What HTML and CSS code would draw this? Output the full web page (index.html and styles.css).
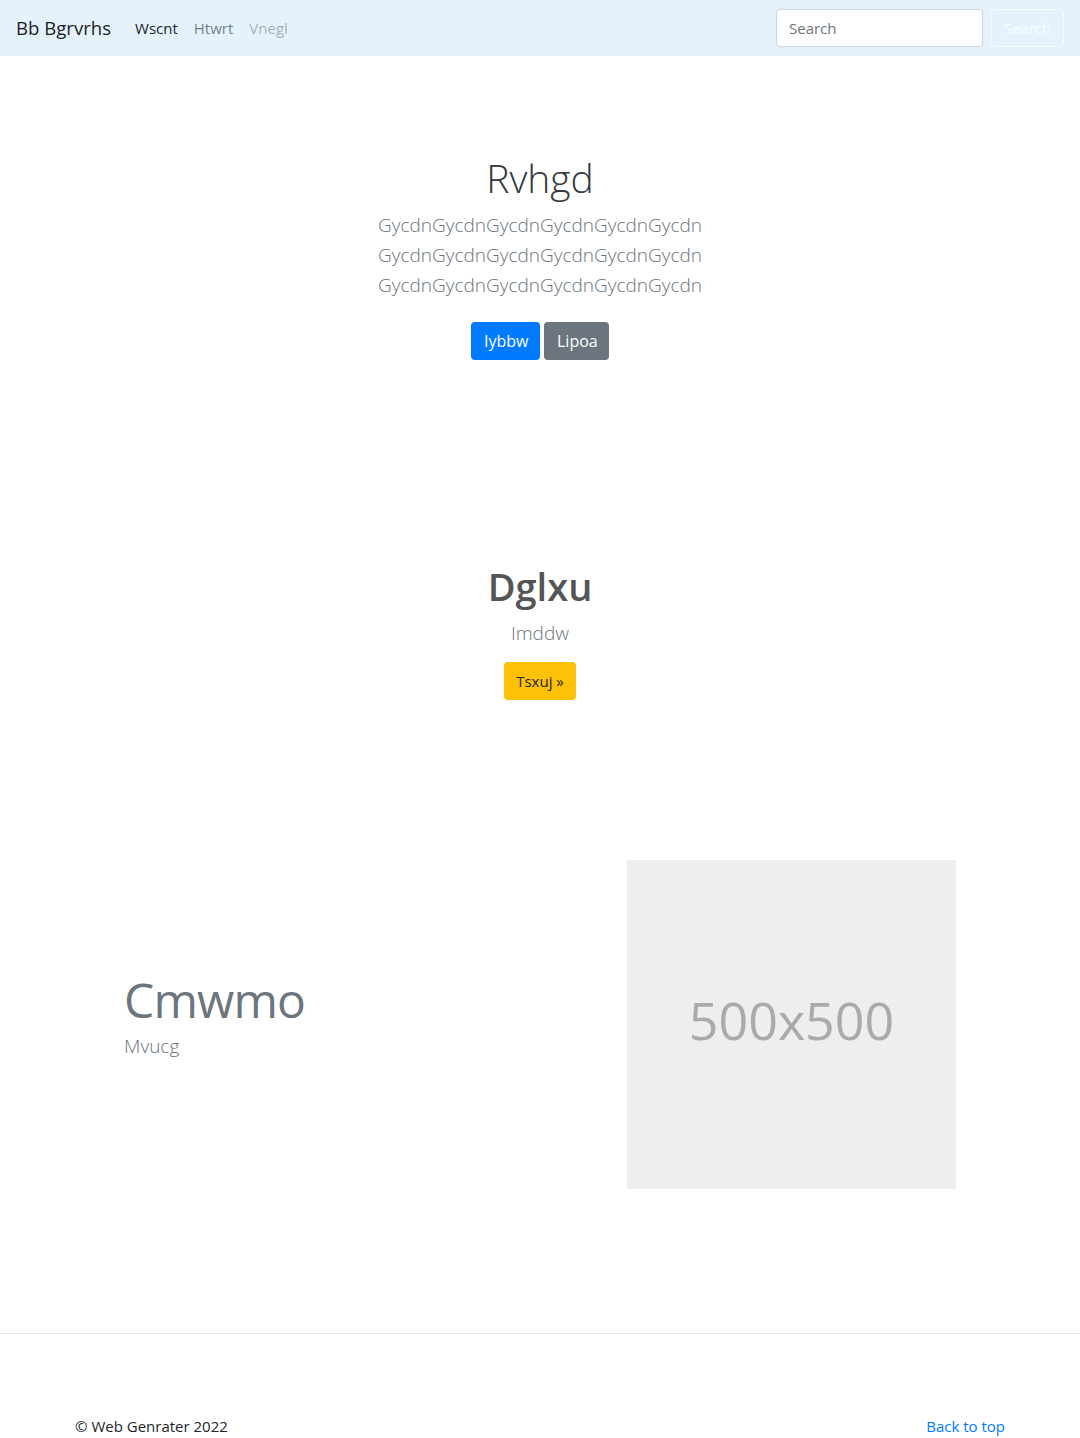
FILE: index.html
```html
<!DOCTYPE html>
<html lang="en">
<head>
<meta charset="utf-8">
<title>Bb Bgrvrhs</title>
<link rel="stylesheet" href="styles.css">
</head>
<body>
<nav class="navbar">
  <a class="brand" href="#">Bb Bgrvrhs</a>
  <ul class="nav-links">
    <li><a class="nav-link active" href="#">Wscnt</a></li>
    <li><a class="nav-link" href="#">Htwrt</a></li>
    <li><a class="nav-link disabled" href="#">Vnegl</a></li>
  </ul>
  <form class="search">
    <input class="search-input" type="text" placeholder="Search">
    <button class="search-btn" type="button">Search</button>
  </form>
</nav>

<main>
  <section class="hero">
    <h1 class="hero-title">Rvhgd</h1>
    <p class="lead hero-lead">GycdnGycdnGycdnGycdnGycdnGycdn GycdnGycdnGycdnGycdnGycdnGycdn GycdnGycdnGycdnGycdnGycdnGycdn</p>
    <div class="hero-actions">
      <a class="btn btn-primary" href="#">Iybbw</a>
      <a class="btn btn-secondary" href="#">Lipoa</a>
    </div>
  </section>

  <section class="promo">
    <h2 class="promo-title">Dglxu</h2>
    <p class="lead promo-lead">Imddw</p>
    <a class="btn btn-warning" href="#">Tsxuj &raquo;</a>
  </section>

  <section class="feature">
    <div class="feature-text">
      <h2 class="feature-title">Cmwmo</h2>
      <p class="lead feature-lead">Mvucg</p>
    </div>
    <div class="placeholder">500x500</div>
  </section>
</main>

<footer class="footer">
  <p class="copy">&copy; Web Genrater 2022</p>
  <a class="back" href="#">Back to top</a>
</footer>
</body>
</html>
```

FILE: styles.css
```css
* { box-sizing: border-box; }

html, body {
  margin: 0;
  padding: 0;
}

body {
  font-family: "Open Sans", "Noto Sans", "Liberation Sans", sans-serif;
  font-size: 16px;
  line-height: 1.5;
  color: #212529;
  background: #fff;
}

a { text-decoration: none; }

.navbar {
  height: 56px;
  background: #e3f2fd;
  display: flex;
  align-items: center;
  padding: 0 16px;
}

.brand {
  font-size: 18.6px;
  color: rgba(0,0,0,.9);
  margin-right: 16px;
  line-height: 30px;
}

.nav-links {
  list-style: none;
  margin: 0;
  padding: 0;
  display: flex;
  flex: 1;
}

.nav-link {
  display: block;
  padding: 8px;
  font-size: 15px;
  color: rgba(0,0,0,.5);
}

.nav-link.active { color: rgba(0,0,0,.9); }
.nav-link.disabled { color: rgba(0,0,0,.3); }

.search {
  display: flex;
  align-items: center;
  gap: 8px;
}

.search-input {
  width: 207px;
  height: 38px;
  border: 1px solid #ced4da;
  border-radius: 4px;
  padding: 6px 12px;
  font-family: inherit;
  font-size: 15px;
  color: #495057;
  background: #fff;
}

.search-input::placeholder { color: #6c757d; }

.search-btn {
  width: 73px;
  height: 38px;
  border: 1px solid rgba(255,255,255,.7);
  border-radius: 4px;
  background: transparent;
  color: rgba(255,255,255,.8);
  font-family: inherit;
  font-size: 15px;
  padding: 0;
}

.hero {
  padding: 98px 0 0;
  text-align: center;
}

.hero-title {
  margin: 0 0 8px;
  font-size: 39px;
  font-weight: 300;
  line-height: 48px;
  color: #343a40;
}

.lead {
  font-size: 19px;
  font-weight: 300;
  line-height: 30px;
  color: #6c757d;
  margin: 0 0 16px;
}

.hero-lead {
  width: 450px;
  margin-left: auto;
  margin-right: auto;
}

.hero-actions {
  display: flex;
  justify-content: center;
  gap: 4px;
  margin-top: 22px;
}

.btn {
  display: inline-block;
  height: 38px;
  line-height: 36px;
  padding: 0 12px;
  border: 1px solid transparent;
  border-radius: 4px;
  font-size: 16px;
}

.btn-primary { background: #007bff; color: #fff; width: 69px; }
.btn-secondary { background: #6c757d; color: #fff; width: 65px; }
.btn-warning { background: #ffc107; color: #212529; width: 72px; font-size: 15px; padding: 0; }

.promo {
  padding-top: 204px;
  text-align: center;
}

.promo-title {
  margin: 0 0 8px;
  font-size: 38px;
  font-weight: 600;
  line-height: 1.2;
  color: #555;
}

.promo-lead { margin-bottom: 14px; }

.feature {
  margin-top: 160px;
  display: grid;
  grid-template-columns: 503px 329px;
  align-items: center;
  padding-left: 124px;
}

.feature-text {
  padding-bottom: 16px;
}

.feature-title {
  margin: 0 0 3px;
  font-size: 48px;
  font-weight: 400;
  line-height: 56px;
  letter-spacing: -0.8px;
  color: #6c757d;
}

.feature-lead {
  margin: 0;
}

.placeholder {
  width: 329px;
  height: 329px;
  background: #eee;
  color: #aaa;
  font-size: 52px;
  display: flex;
  align-items: center;
  justify-content: center;
  padding-bottom: 8px;
}

.footer {
  margin-top: 144px;
  border-top: 1px solid #e5e5e5;
  padding: 81px 75px 0;
  display: flex;
  justify-content: space-between;
  align-items: baseline;
}

.copy {
  margin: 0;
  font-size: 15px;
  color: #212529;
}

.back {
  font-size: 15px;
  color: #007bff;
}
```
